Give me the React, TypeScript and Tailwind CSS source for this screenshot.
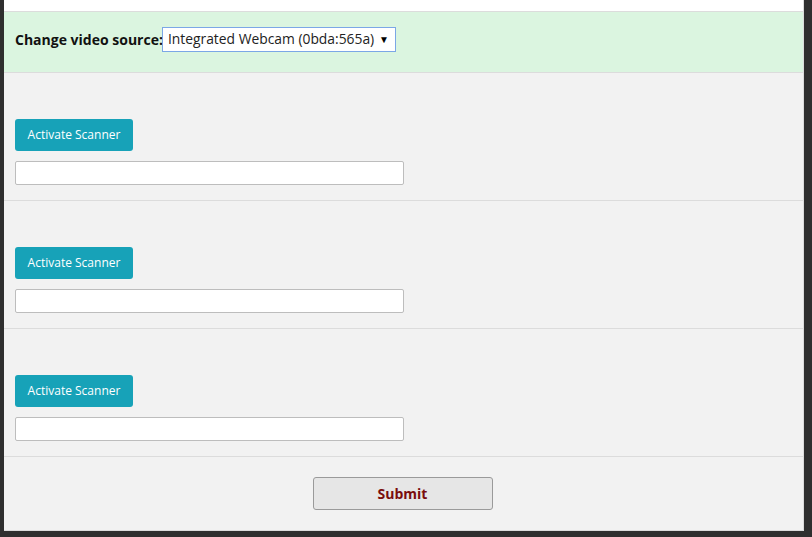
export default function App() {
  const scanners = [1, 2, 3];

  return (
    <div className="h-[537px] w-[812px] bg-[#2f2f2f] pl-[4px] pr-[8px] pb-[6px] font-['Open_Sans',sans-serif] overflow-hidden">
      <div className="h-full flex flex-col bg-[#f2f2f2] border-r border-b border-[#dcdcdc]">
        {/* top strip */}
        <div className="h-[12px] shrink-0 bg-white border-b border-[#dcdcdc]"></div>

        {/* video source */}
        <div className="h-[61px] shrink-0 bg-[#dbf5e0] border-b border-[#dcdcdc] flex items-center pl-[11px] pb-[5px]">
          <label className="text-[14px] font-bold text-[#111] -mr-[1px]">Change video source:</label>
          <div className="h-[25px] w-[234px] shrink-0 bg-white border border-[#7ba7e6] flex items-center pl-[5px] pr-[6px]">
            <span className="text-[13.85px] text-[#222] whitespace-nowrap">Integrated Webcam (0bda:565a)</span>
            <span className="ml-auto text-[10px] text-black">▼</span>
          </div>
        </div>

        {/* scanner rows */}
        {scanners.map((n) => (
          <div key={n} className="h-[128px] shrink-0 border-b border-[#dcdcdc] pl-[11px] pt-[46px]">
            <button className="h-[32px] w-[118px] rounded-[3px] bg-[#17a2b8] text-white text-[12px]">
              Activate Scanner
            </button>
            <input
              type="text"
              className="block mt-[10px] h-[24px] w-[389px] bg-white border border-[#bdbdbd] rounded-[2px] outline-none"
            />
          </div>
        ))}

        {/* submit */}
        <div className="flex justify-center pt-[20px] pr-[2px]">
          <button className="h-[33px] w-[180px] bg-[#e6e6e6] border border-[#9a9a9a] rounded-[3px] text-[14px] font-bold text-[#7a0d0d]">
            Submit
          </button>
        </div>
      </div>
    </div>
  );
}
